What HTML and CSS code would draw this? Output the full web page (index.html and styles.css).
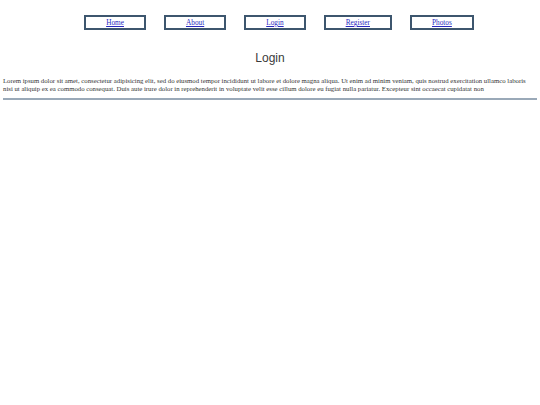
FILE: index.html
```html
<!DOCTYPE html>
<html>
<head>
<meta charset="utf-8">
<link rel="stylesheet" href="styles.css">
</head>
<body>
<nav class="nav">
  <a class="btn" href="#">Home</a>
  <a class="btn" href="#">About</a>
  <a class="btn" href="#">Login</a>
  <a class="btn" href="#">Register</a>
  <a class="btn" href="#">Photos</a>
</nav>
<h1 class="title">Login</h1>
<p class="text">Lorem ipsum dolor sit amet, consectetur adipisicing elit, sed do eiusmod tempor incididunt ut labore et dolore magna aliqua. Ut enim ad minim veniam, quis nostrud exercitation ullamco laboris nisi ut aliquip ex ea commodo consequat. Duis aute irure dolor in reprehenderit in voluptate velit esse cillum dolore eu fugiat nulla pariatur. Excepteur sint occaecat cupidatat non</p>
<hr class="rule">
</body>
</html>
```
FILE: styles.css
```css
html, body {
  margin: 0;
  padding: 0;
  background: #fff;
}
body {
  padding: 0 3px;
  font-family: "Liberation Serif", serif;
}
.nav {
  display: flex;
  justify-content: center;
  gap: 18px;
  padding: 15px 0 0 18px;
}
.btn {
  display: block;
  box-sizing: border-box;
  height: 15px;
  line-height: 11px;
  padding: 0 20px;
  border: 2px solid #3d566e;
  font-size: 7.3px;
  color: #2a2ac0;
  text-decoration: underline;
  text-align: center;
}
.title {
  margin: 21px 0 0;
  text-align: center;
  font-family: "Liberation Sans", Arial, sans-serif;
  font-weight: normal;
  font-size: 12px;
  line-height: 14px;
  color: #3a3a3a;
}
.text {
  margin: 12px 0 0;
  font-size: 6.75px;
  line-height: 8px;
  color: #333;
}
.rule {
  margin: 5px 0 0;
  border: 0;
  height: 2px;
  background: #9aa9b8;
}
```
